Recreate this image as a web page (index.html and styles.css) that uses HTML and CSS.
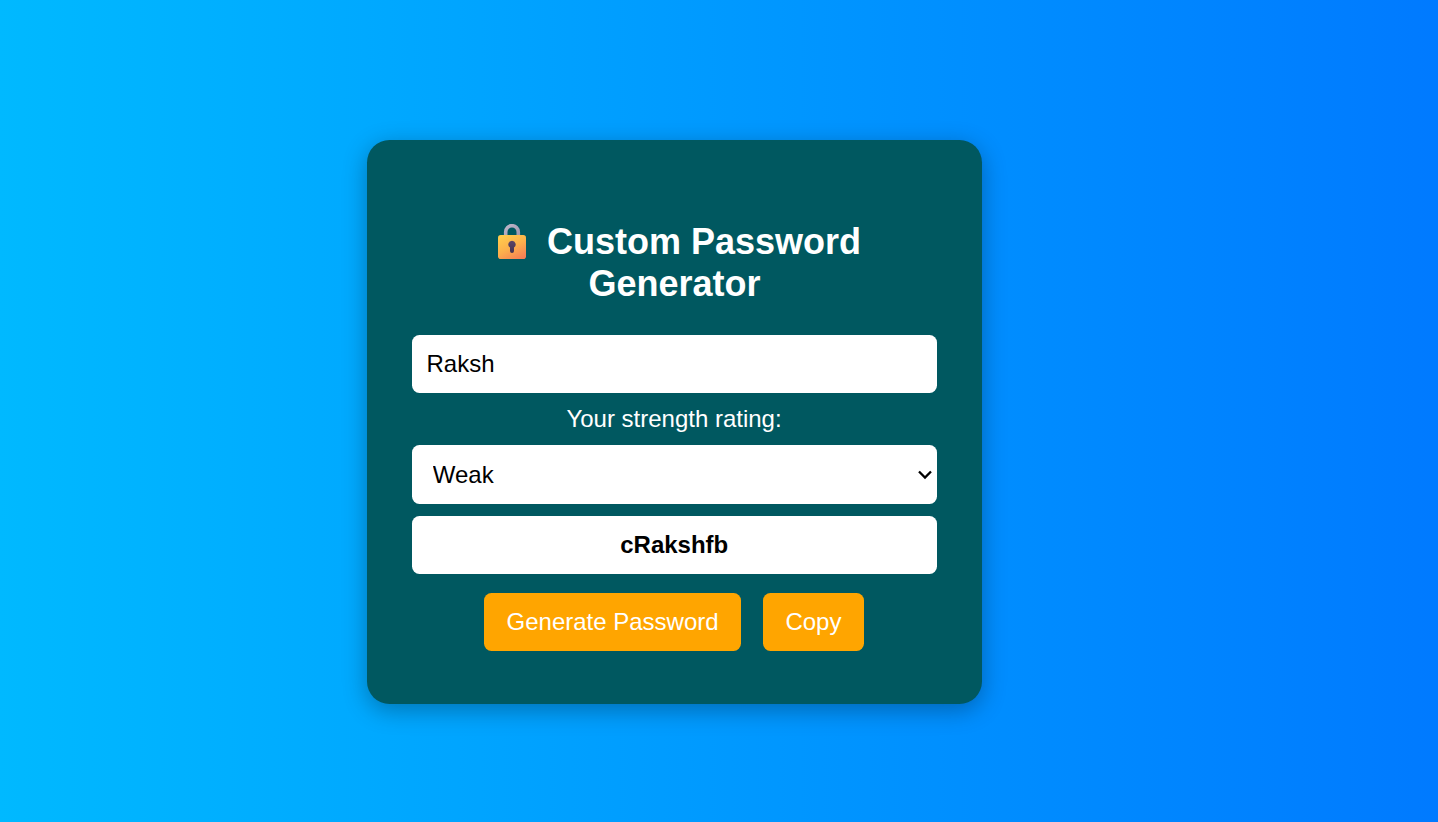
FILE: index.html
```html
<!DOCTYPE html>
<html lang="en">
<head>
<meta charset="utf-8">
<title>Custom Password Generator</title>
<link rel="stylesheet" href="styles.css">
</head>
<body>
<main class="card">
  <h2 class="title"><svg class="lock" viewBox="0 0 28 36" aria-hidden="true">
    <defs>
      <linearGradient id="body" x1="0.2" y1="0" x2="0.8" y2="1"><stop offset="0" stop-color="#ffcb4c"/><stop offset=".5" stop-color="#fcb04c"/><stop offset="1" stop-color="#f57f55"/></linearGradient>
      <linearGradient id="shackle" x1="0" y1="0" x2="1" y2="1"><stop offset="0" stop-color="#bdb4c8"/><stop offset="1" stop-color="#a097ad"/></linearGradient>
      <linearGradient id="hole" x1="0" y1="0" x2="0" y2="1"><stop offset="0" stop-color="#5c4568"/><stop offset="1" stop-color="#433350"/></linearGradient>
    </defs>
    <path d="M7.7 12V8a6.3 6.3 0 0 1 12.6 0V12" fill="none" stroke="url(#shackle)" stroke-width="3.6"/>
    <rect x="0" y="11" width="28" height="24" rx="2.8" fill="url(#body)"/>
    <path d="M14 16.8a3.7 3.7 0 0 0-2 6.8v3.4a2 2 0 0 0 4 0V23.6a3.7 3.7 0 0 0-2-6.8z" fill="url(#hole)"/>
  </svg>Custom Password Generator</h2>
  <input class="field" type="text" value="Raksh" aria-label="Word">
  <label class="rating" for="strength">Your strength rating:</label>
  <div class="select-wrap">
    <select class="field select" id="strength"><option>Weak</option><option>Medium</option><option>Strong</option></select>
    <svg class="chevron" viewBox="0 0 14 10" aria-hidden="true"><path d="M1 1.5 7 7.5l6-6" fill="none" stroke="#000" stroke-width="2.3"/></svg>
  </div>
  <input class="field result" type="text" value="cRakshfb" readonly aria-label="Password">
  <div class="actions">
    <button class="btn">Generate Password</button>
    <button class="btn">Copy</button>
  </div>
</main>
</body>
</html>
```
FILE: styles.css
```css
* { box-sizing: border-box; }
body {
  margin: 0;
  height: 822px;
  padding-right: 89px;
  padding-top: 22px;
  overflow: hidden;
  display: flex;
  justify-content: center;
  align-items: center;
  background: linear-gradient(to right, #00b9ff, #007aff);
  font-family: "Liberation Sans", Arial, sans-serif;
}
.card {
  width: 615px;
  height: 564px;
  padding: 81px 45px 0;
  border-radius: 22.5px;
  background: #005860;
  box-shadow: 0 6px 24px rgba(0, 0, 0, 0.3);
  color: #fff;
  text-align: center;
  font-size: 24px;
}
.title {
  margin: 0 0 30px;
  padding: 0 70px;
  font-size: 36px;
  line-height: 42px;
}
.lock {
  width: 28px;
  height: 36px;
  margin-left: 10px;
  margin-right: 21px;
  vertical-align: -6px;
}
.field {
  display: block;
  width: 100%;
  height: 58px;
  padding: 0 15px 0 14.5px;
  border: 0;
  border-radius: 7.5px;
  background: #fff;
  color: #000;
  font: 24px "Liberation Sans", Arial, sans-serif;
  outline: 0;
}
.rating {
  display: block;
  line-height: 28px;
  margin: 12px 0;
  padding-right: 1px;
}
.select-wrap { position: relative; }
.select {
  height: 59px;
  padding-left: 20.8px;
  appearance: none;
}
.chevron {
  position: absolute;
  right: 5px;
  top: 25px;
  width: 14px;
  height: 10px;
}
.result {
  margin-top: 12px;
  text-align: center;
  font-weight: bold;
}
.actions {
  display: flex;
  justify-content: center;
  gap: 22px;
  margin-top: 19px;
  padding-right: 1px;
}
.btn {
  height: 58px;
  padding: 0 22.4px;
  border: 0;
  border-radius: 7.5px;
  background: #ffa500;
  color: #fff;
  font: 24px "Liberation Sans", Arial, sans-serif;
}
```
